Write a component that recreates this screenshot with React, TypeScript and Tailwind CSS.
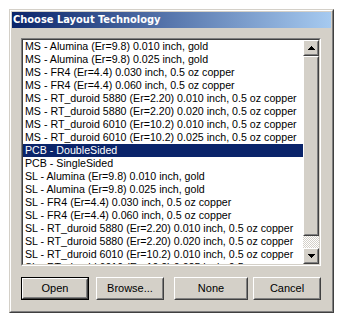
import React from 'react';

const items = [
  'MS - Alumina (Er=9.8) 0.010 inch, gold',
  'MS - Alumina (Er=9.8) 0.025 inch, gold',
  'MS - FR4 (Er=4.4) 0.030 inch, 0.5 oz copper',
  'MS - FR4 (Er=4.4) 0.060 inch, 0.5 oz copper',
  'MS - RT_duroid 5880 (Er=2.20) 0.010 inch, 0.5 oz copper',
  'MS - RT_duroid 5880 (Er=2.20) 0.020 inch, 0.5 oz copper',
  'MS - RT_duroid 6010 (Er=10.2) 0.010 inch, 0.5 oz copper',
  'MS - RT_duroid 6010 (Er=10.2) 0.025 inch, 0.5 oz copper',
  'PCB - DoubleSided',
  'PCB - SingleSided',
  'SL - Alumina (Er=9.8) 0.010 inch, gold',
  'SL - Alumina (Er=9.8) 0.025 inch, gold',
  'SL - FR4 (Er=4.4) 0.030 inch, 0.5 oz copper',
  'SL - FR4 (Er=4.4) 0.060 inch, 0.5 oz copper',
  'SL - RT_duroid 5880 (Er=2.20) 0.010 inch, 0.5 oz copper',
  'SL - RT_duroid 5880 (Er=2.20) 0.020 inch, 0.5 oz copper',
  'SL - RT_duroid 6010 (Er=10.2) 0.010 inch, 0.5 oz copper',
  'SL - RT_duroid 6010 (Er=10.2) 0.025 inch, 0.5 oz copper',
];

const selected = 8;

// Classic raised 3D edge (buttons, scroll arrows, thumb)
function Raised({ className = '', children }: { className?: string; children?: React.ReactNode }) {
  return (
    <div className={`border border-t-white border-l-white border-r-[#404040] border-b-[#404040] bg-[#d4d0c8] ${className}`}>
      <div className="flex h-full w-full items-center justify-center border border-t-[#d4d0c8] border-l-[#d4d0c8] border-r-[#808080] border-b-[#808080]">
        {children}
      </div>
    </div>
  );
}

function Arrow({ up }: { up?: boolean }) {
  return (
    <svg width="7" height="4" viewBox="0 0 7 4" className={up ? '' : 'rotate-180'}>
      <path d="M3 0h1v1h1v1h1v1h1v1H0V3h1V2h1V1h1z" fill="#000" />
    </svg>
  );
}

function Button({ label, isDefault, className = '' }: { label: string; isDefault?: boolean; className?: string }) {
  return (
    <div className={`h-[23px] ${isDefault ? 'border border-black' : ''} ${className}`}>
      <Raised className="h-full w-full">
        <span className="text-[11px] text-black">{label}</span>
      </Raised>
    </div>
  );
}

export default function App() {
  return (
    <div
      className="h-[324px] w-[344px] bg-white pl-[9px] pt-[9px]"
      style={{ fontFamily: '"Liberation Sans", Arial, sans-serif' }}
    >
      {/* window frame */}
      <div className="h-[304px] w-[325px] border border-t-[#d4d0c8] border-l-[#d4d0c8] border-r-[#404040] border-b-[#404040] bg-[#d4d0c8]">
        <div className="flex h-full w-full flex-col border border-t-white border-l-white border-r-[#808080] border-b-[#808080] p-px">
          {/* title bar */}
          <div className="flex h-[16px] items-center bg-[linear-gradient(to_right,#0a246a,#a6caf0)] pl-px">
            <span
              className="text-[11px] font-bold text-white"
              style={{ fontFamily: '"DejaVu Sans Condensed", "DejaVu Sans", sans-serif' }}
            >
              Choose Layout Technology
            </span>
          </div>

          <div className="flex flex-1 flex-col px-[9px] pt-[10px]">
            {/* list box */}
            <div className="h-[228px] w-[300px] border border-t-[#808080] border-l-[#808080] border-r-white border-b-white">
              <div className="flex h-full w-full border border-t-[#404040] border-l-[#404040] border-r-[#d4d0c8] border-b-[#d4d0c8] bg-white">
                <div className="flex-1 overflow-hidden">
                  {items.map((t, i) => (
                    <div
                      key={t}
                      className={`h-[13px] whitespace-nowrap pl-[2px] text-[10.65px] leading-[13px] ${
                        i === selected ? 'bg-[#0a246a] text-white' : 'text-black'
                      }`}
                    >
                      {t}
                    </div>
                  ))}
                </div>
                {/* scrollbar */}
                <div className="flex w-[16px] flex-col">
                  <Raised className="h-[16px] w-[16px]">
                    <Arrow up />
                  </Raised>
                  <Raised className="h-[180px] w-[16px]" />
                  <div className="flex-1 bg-[repeating-conic-gradient(#d4d0c8_0_25%,#ffffff_0_50%)] bg-[length:2px_2px]" />
                  <Raised className="h-[16px] w-[16px]">
                    <Arrow />
                  </Raised>
                </div>
              </div>
            </div>

            {/* buttons */}
            <div className="mt-[11px] flex">
              <Button label="Open" isDefault className="w-[68px]" />
              <Button label="Browse..." className="ml-[7px] w-[68px]" />
              <Button label="None" className="ml-[10px] w-[74px]" />
              <Button label="Cancel" className="ml-[5px] w-[68px]" />
            </div>
          </div>
        </div>
      </div>
    </div>
  );
}
